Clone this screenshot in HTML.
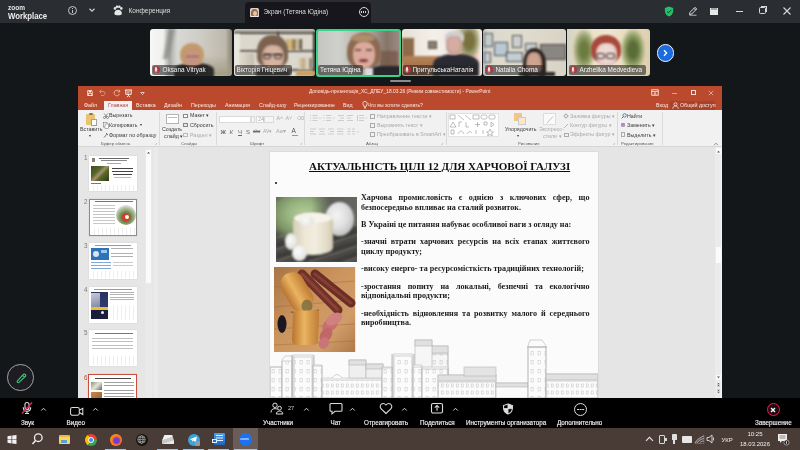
<!DOCTYPE html>
<html><head><meta charset="utf-8">
<style>
*{margin:0;padding:0;box-sizing:border-box}
html,body{width:800px;height:450px;overflow:hidden;background:#14171a;font-family:"Liberation Sans",sans-serif}
.a{position:absolute}
.t{position:absolute;white-space:nowrap;line-height:1}
#tb{left:0;top:0;width:800px;height:23px;background:#2c2d30}
#ppt{left:78px;top:86px;width:644px;height:312px;background:#e6e6e6;overflow:hidden}
#zbar{left:0;top:398px;width:800px;height:30px;background:#050505}
#task{left:0;top:428px;width:800px;height:22px;background:#4a3b35}
.vt{overflow:hidden;border-radius:3px}
.vt>div{filter:blur(1px)}
.nl{background:rgba(36,36,36,.6);border-radius:2px}
.mic{width:7px;height:7px;border-radius:50%;background:#a8383e}
.mic::after{content:"";position:absolute;left:2.6px;top:1.4px;width:1.8px;height:3.2px;border-radius:1px;background:#e8e0e0;box-shadow:0 1.2px 0 0.3px rgba(232,224,224,.6)}
.nt{font-size:6.4px;color:#f2f2f2}
.zl{font-size:6.3px;color:#f6f6f6;-webkit-text-stroke:0.12px #f6f6f6}
.tab{font-size:5.3px;color:#fbeae5}
.rb{font-size:5.3px;color:#3c3c3c}
.dis{color:#a8a8a8}
.gl{font-size:4.3px;color:#5c5c5c}
.sep{top:26px;width:0.6px;height:33px;background:#dadada}
.num{font-size:6.3px;color:#7a7a7a}
.th{width:47.5px;height:35.6px;background:#fff;overflow:hidden;box-shadow:0 0 0 0.5px #d8d8d8}
.bt{position:absolute;left:91px;width:228.5px;font-family:"Liberation Serif",serif;font-weight:bold;font-size:8.1px;line-height:9.8px;color:#1a1a1a}
.bt div{white-space:nowrap}
.bt .j{text-align:justify;text-align-last:justify;white-space:normal}
.img{filter:blur(1px)}
</style></head>
<body>
<svg width="0" height="0" style="position:absolute"><filter id="gb" x="0" y="0" width="100%" height="100%"><feGaussianBlur stdDeviation="0.5"/></filter></svg>
<div id="root" style="position:absolute;left:0;top:0;width:800px;height:450px;overflow:hidden;filter:url(#gb)">
<!-- Zoom title bar -->
<div id="tb" class="a">
  <div class="t" style="left:8px;top:4.8px;font-size:6.5px;font-weight:bold;color:#e6e6e6">zoom</div>
  <div class="t" style="left:8.3px;top:10.8px;font-size:9.6px;font-weight:bold;color:#ededed;transform:scaleX(0.81);transform-origin:0 0">Workplace</div>
  <!-- info icon -->
  <div class="a" style="left:67.8px;top:6px;width:9px;height:9px;border:1px solid #c8c8c8;border-radius:50%"></div>
  <div class="a" style="left:71.8px;top:7.8px;width:1.1px;height:1.1px;background:#c8c8c8"></div>
  <div class="a" style="left:71.8px;top:9.5px;width:1.1px;height:3.5px;background:#c8c8c8"></div>
  <!-- chevron -->
  <svg class="a" style="left:88px;top:7px" width="8" height="6" viewBox="0 0 8 6"><path d="M1.5 1.8 L4 4.2 L6.5 1.8" stroke="#cfcfcf" stroke-width="1.2" fill="none"/></svg>
  <!-- paw icon -->
  <svg class="a" style="left:113px;top:5px" width="10" height="11" viewBox="0 0 10 11"><circle cx="2" cy="3.4" r="1.3" fill="#e6e6e6"/><circle cx="4" cy="1.7" r="1.3" fill="#e6e6e6"/><circle cx="6.3" cy="1.7" r="1.3" fill="#e6e6e6"/><circle cx="8.3" cy="3.4" r="1.3" fill="#e6e6e6"/><path d="M1.3 8.5 C1.6 5.6 3.4 4.7 5.1 4.7 C6.8 4.7 8.6 5.6 8.9 8.5 C8.9 9.6 7.8 10.3 5.1 10.3 C2.5 10.3 1.3 9.6 1.3 8.5Z" fill="#e6e6e6"/></svg>
  <div class="t" style="left:128.5px;top:8.4px;font-size:6.5px;color:#dedede">Конференция</div>
  <!-- share tab -->
  <div class="a" style="left:245px;top:2px;width:126px;height:21px;background:#16171a;border-radius:4px 4px 0 0"></div>
  <div class="a" style="left:250px;top:8px;width:9px;height:9px;background:#d8d2cc;border-radius:1.5px;overflow:hidden"><div class="a" style="left:1px;top:0.5px;width:7px;height:8px;border-radius:50% 50% 40% 40%;background:#9a6a48"></div><div class="a" style="left:2.8px;top:2.5px;width:4.5px;height:5.5px;border-radius:50%;background:#e8c4a8"></div><div class="a" style="left:0;top:7.5px;width:9px;height:2px;background:#f0ece8"></div></div>
  <div class="t" style="left:263.5px;top:9px;font-size:6.4px;color:#dcdcdc">Экран (Тетяна Юдіна)</div>
  <div class="a" style="left:358.5px;top:7px;width:10px;height:10px;border:1.2px solid #d8d8d8;border-radius:50%"></div>
  <div class="a" style="left:360.7px;top:11.4px;width:5.5px;height:1.3px;border-left:1.3px solid #d8d8d8;border-right:1.3px solid #d8d8d8"></div>
  <div class="a" style="left:362.8px;top:11.4px;width:1.3px;height:1.3px;background:#d8d8d8"></div>
  <!-- right icons -->
  <svg class="a" style="left:664px;top:6px" width="10" height="11" viewBox="0 0 10 11"><path d="M5 0.5 L9.2 2 L9 6 C8.6 8.4 6.8 9.8 5 10.5 C3.2 9.8 1.4 8.4 1 6 L0.8 2 Z" fill="#24c266"/><path d="M3 5.4 L4.5 6.8 L7.2 4" stroke="#0d3a20" stroke-width="1" fill="none"/></svg>
  <svg class="a" style="left:688px;top:6px" width="10" height="10" viewBox="0 0 10 10"><path d="M1.5 8.5 L2 6.3 L7 1.3 L8.7 3 L3.7 8 Z M6 2.3 L7.7 4" stroke="#dcdcdc" stroke-width="1" fill="none"/><path d="M1.5 9.2 L8.5 9.2" stroke="#dcdcdc" stroke-width="0.8"/></svg>
  <svg class="a" style="left:709px;top:6px" width="10" height="10" viewBox="0 0 10 10"><rect x="1" y="2" width="8" height="7" fill="#e8e8e8"/><path d="M3 2 L3 4 M5 2 L5 4 M7 2 L7 4" stroke="#2a2a2c" stroke-width="0.7"/></svg>
  <div class="a" style="left:736px;top:11px;width:7px;height:1px;background:#d8d8d8"></div>
  <div class="a" style="left:759px;top:7px;width:7px;height:7px;border:1px solid #d8d8d8;border-radius:1.5px"></div>
  <div class="a" style="left:761px;top:6px;width:6px;height:6px;border-top:1px solid #d8d8d8;border-right:1px solid #d8d8d8"></div>
  <svg class="a" style="left:782px;top:6px" width="10" height="10" viewBox="0 0 10 10"><path d="M1.5 1.5 L8.5 8.5 M8.5 1.5 L1.5 8.5" stroke="#d8d8d8" stroke-width="1.1"/></svg>
</div>
<!-- video strip -->
<div class="a vt" style="left:150px;top:29px;width:82px;height:47px;background:linear-gradient(90deg,#f6f6f4 0%,#f0f0ee 16%,#a8a8a4 24%,#c4c4c0 29%,#d8d8d4 34%,#cfcdc6 60%,#bdb8ac 92%,#8a8272 100%)">
  <div class="a" style="left:14px;top:0;width:10px;height:30px;background:linear-gradient(90deg,rgba(140,140,136,0),#8c8c88,rgba(140,140,136,0));transform:skewX(-12deg)"></div>
  <div class="a" style="left:44px;top:26px;width:38px;height:21px;background:linear-gradient(180deg,rgba(170,162,136,0) 0,#a49c82 100%)"></div>
  <div class="a" style="left:24px;top:34px;width:40px;height:15px;background:#2c2a2a;border-radius:45% 45% 0 0"></div>
  <div class="a" style="left:30px;top:14px;width:24px;height:23px;background:#c29a6c;border-radius:50% 50% 42% 42%"></div>
  <div class="a" style="left:34.5px;top:21px;width:15.5px;height:17px;background:#c89282;border-radius:42% 42% 48% 48%"></div>
  <div class="a" style="left:36px;top:26.5px;width:13px;height:1.6px;background:#7e5a52"></div>
</div>
<div class="a vt" style="left:233.5px;top:29px;width:81.5px;height:47px;background:#dcd8ce">
  <div class="a" style="left:0;top:0;width:82px;height:3px;background:#b4afa5"></div>
  <div class="a" style="left:0;top:3px;width:82px;height:2.2px;background:#4e483f"></div>
  <div class="a" style="left:4px;top:21px;width:78px;height:2.2px;background:#625a50"></div>
  <div class="a" style="left:4px;top:40px;width:78px;height:2.2px;background:#625a50"></div>
  <div class="a" style="left:43px;top:3px;width:2px;height:20px;background:#4a4640"></div>
  <div class="a" style="left:79px;top:3px;width:3px;height:44px;background:#3a362f"></div>
  <div class="a" style="left:0;top:5px;width:6px;height:42px;background:#ece8e0"></div>
  <div class="a" style="left:52px;top:10px;width:16px;height:11px;background:linear-gradient(90deg,#c9a860,#d6c08a 30%,#8a6a3a 50%,#d8cfb8 70%,#4a3a2a)"></div>
  <div class="a" style="left:64px;top:29px;width:14px;height:11px;background:linear-gradient(90deg,#e0d8c0,#bfa880 40%,#e8e0d0 70%,#5a4a3a)"></div>
  <div class="a" style="left:62px;top:42px;width:20px;height:5px;background:#c9a060"></div>
  <div class="a" style="left:6px;top:24px;width:14px;height:16px;background:linear-gradient(90deg,#e0dace,#c4bcac)"></div>
  <div class="a" style="left:23.5px;top:6px;width:31px;height:32px;background:#7a6250;border-radius:48% 48% 30% 30%"></div>
  <div class="a" style="left:28px;top:16px;width:22px;height:25px;background:radial-gradient(ellipse at 50% 45%,#d6b4a2 0 45%,#c09c8a 80%);border-radius:40% 40% 45% 45%"></div>
  <div class="a" style="left:29px;top:24.5px;width:20px;height:1.5px;background:#2e2626"></div>
  <div class="a" style="left:29.5px;top:24.5px;width:8px;height:5.5px;border:1.5px solid #2e2626;border-radius:2px"></div>
  <div class="a" style="left:40.5px;top:24.5px;width:8px;height:5.5px;border:1.5px solid #2e2626;border-radius:2px"></div>
  <div class="a" style="left:22px;top:40px;width:34px;height:7px;background:#4a4644;border-radius:40% 40% 0 0"></div>
</div>
<div class="a vt" style="left:316px;top:29px;width:84.5px;height:47.5px;background:linear-gradient(90deg,#c4c5c1 0%,#d0d1cd 25%,#bdbbb5 45%,#a59e96 68%,#867468 85%,#9a8a80 100%);border:2px solid #34d489">
  <div class="a" style="left:62px;top:20px;width:18px;height:24px;background:#6e4e3c;opacity:.6"></div>
  <div class="a" style="left:29px;top:2px;width:34px;height:36px;background:#8c6a50;border-radius:50% 50% 40% 40%"></div>
  <div class="a" style="left:33px;top:3px;width:24px;height:8px;background:#ae8e6c;border-radius:50%"></div>
  <div class="a" style="left:34.5px;top:11px;width:22px;height:26px;background:#dcaa9c;border-radius:40% 40% 46% 46%"></div>
  <div class="a" style="left:37px;top:18px;width:6px;height:1.6px;background:#7a5a50"></div>
  <div class="a" style="left:48px;top:18px;width:6px;height:1.6px;background:#7a5a50"></div>
  <div class="a" style="left:41px;top:28px;width:9px;height:3px;background:#7a3a3a;border-radius:50%"></div>
  <div class="a" style="left:52px;top:35px;width:32px;height:11px;background:#26262a;border-radius:40% 0 0 0"></div>
  <div class="a" style="left:47px;top:37px;width:8px;height:9px;background:#dcdce0"></div>
</div>
<div class="a vt" style="left:401.5px;top:29px;width:80.5px;height:47px;background:linear-gradient(90deg,#e6e0d6 0%,#f4f0ea 40%,#eee8e0 64%,#d8b8a0 76%,#e8a890 86%,#f0d8cc 95%,#f6f2ee 100%)">
  <div class="a" style="left:0;top:9px;width:12px;height:24px;background:#8d6a48"></div>
  <div class="a" style="left:0;top:27px;width:38px;height:20px;background:linear-gradient(180deg,#b88458,#946440)"></div>
  <div class="a" style="left:26px;top:12px;width:9px;height:8px;background:#8a8070;border:1px solid #5a5048"></div>
  <div class="a" style="left:56px;top:0;width:22px;height:30px;background:radial-gradient(ellipse at 50% 40%,#7a7040 0 30%,#98a070 50%,rgba(160,150,100,0) 75%)"></div>
  <div class="a" style="left:31px;top:25px;width:46px;height:22px;background:#2c2c34;border-radius:45% 45% 0 0"></div>
  <div class="a" style="left:43px;top:2px;width:19px;height:11px;background:#d0cece;border-radius:50% 50% 20% 20%"></div>
  <div class="a" style="left:44.5px;top:7px;width:15.5px;height:19px;background:radial-gradient(ellipse at 50% 45%,#d4aca2 0 45%,#bc948c 80%);border-radius:40% 40% 45% 45%"></div>
</div>
<div class="a vt" style="left:482.5px;top:29px;width:83.5px;height:47px;background:linear-gradient(90deg,#b8bcc0 0,#dcd8cc 6%,#e0dccd 50%,#d8d3c4 100%)">
  <div class="a" style="left:1px;top:4px;width:9px;height:14px;border:1.5px solid #505860;background:#c4ccc8"></div>
  <div class="a" style="left:11.5px;top:13px;width:14px;height:14px;border:1.5px solid #4a5460;background:#bcc8d0"></div>
  <div class="a" style="left:29.5px;top:6px;width:10px;height:13px;border:1.5px solid #505458;background:#ccd0cc"></div>
  <div class="a" style="left:23.5px;top:23px;width:17px;height:10px;border:1.5px solid #4a5058;background:#c4ccd4"></div>
  <div class="a" style="left:1.5px;top:23px;width:7px;height:11px;border:1.5px solid #50585e;background:#c4ccd0"></div>
  <div class="a" style="left:42.5px;top:14px;width:12px;height:9px;border:1.5px solid #555a5e;background:#c8cccc"></div>
  <div class="a" style="left:57.5px;top:15px;width:26px;height:16px;border:1.6px solid #4a4040;background:#8a8684"></div>
  <div class="a" style="left:40px;top:19px;width:23px;height:30px;background:#2a2220;border-radius:50% 50% 20% 20%"></div>
  <div class="a" style="left:43.5px;top:23px;width:16px;height:26px;background:radial-gradient(ellipse at 50% 45%,#cca490 0 45%,#b48474 80%);border-radius:40% 40% 45% 45%"></div>
  <div class="a" style="left:36px;top:43px;width:36px;height:4px;background:#2a2624"></div>
</div>
<div class="a vt" style="left:566.8px;top:29px;width:83.2px;height:47px;background:linear-gradient(90deg,#d6d2c2 0,#e9dfc4 20%,#efe6ce 50%,#e6d8b8 80%,#ddd0b0 100%);border-radius:0 3px 3px 0">
  <div class="a" style="left:6px;top:0;width:22px;height:42px;background:radial-gradient(ellipse at 50% 50%,#6c7c40 0 25%,#98a470 50%,rgba(180,180,140,0) 75%)"></div>
  <div class="a" style="left:54px;top:0;width:24px;height:42px;background:radial-gradient(ellipse at 50% 50%,#5c6c38 0 25%,#90a068 50%,rgba(180,180,140,0) 75%)"></div>
  <div class="a" style="left:24px;top:6px;width:30px;height:27px;background:#a8483a;border-radius:50% 50% 35% 35%"></div>
  <div class="a" style="left:29px;top:14px;width:21px;height:24px;background:radial-gradient(ellipse at 50% 45%,#eed8d2 0 45%,#dcbcb4 80%);border-radius:40% 40% 45% 45%"></div>
  <div class="a" style="left:29.5px;top:24px;width:9px;height:5.5px;border:1.6px solid #2e2424;border-radius:40%"></div>
  <div class="a" style="left:39.5px;top:24px;width:9px;height:5.5px;border:1.6px solid #2e2424;border-radius:40%"></div>
</div>
<!-- name labels -->
<div class="a nl" style="left:151.5px;top:64.5px;width:56px;height:10px"></div>
<div class="a mic" style="left:152.5px;top:66px"></div>
<div class="t nt" style="left:162.5px;top:66.5px">Oksana Vitryak</div>
<div class="a nl" style="left:234.5px;top:64.5px;width:57px;height:10px"></div>
<div class="t nt" style="left:236.5px;top:66.5px">Вікторія Гніцевич</div>
<div class="a nl" style="left:318px;top:64.5px;width:45px;height:10px"></div>
<div class="t nt" style="left:320px;top:66.5px">Тетяна Юдіна</div>
<div class="a nl" style="left:402.5px;top:64.5px;width:74px;height:10px"></div>
<div class="a mic" style="left:403.5px;top:66px"></div>
<div class="t nt" style="left:412.5px;top:66.5px">ПритульськаНаталія</div>
<div class="a nl" style="left:484.5px;top:64.5px;width:60px;height:10px"></div>
<div class="a mic" style="left:485.5px;top:66px"></div>
<div class="t nt" style="left:495.5px;top:66.5px">Natalia Choma</div>
<div class="a nl" style="left:568.5px;top:64.5px;width:77px;height:10px"></div>
<div class="a mic" style="left:569.5px;top:66px"></div>
<div class="t nt" style="left:579.5px;top:66.5px">Arzhelika Medvedieva</div>
<!-- next button -->
<div class="a" style="left:656.5px;top:44px;width:17.5px;height:17.5px;border-radius:50%;background:#1d6ce0;border:1.5px solid #f0f4ff"></div>
<svg class="a" style="left:660.3px;top:47.8px" width="10" height="10" viewBox="0 0 10 10"><path d="M4 2.3 L6.6 5 L4 7.7" stroke="#fff" stroke-width="1.3" fill="none"/></svg>
<!-- handle -->
<div class="a" style="left:389.5px;top:80px;width:21px;height:2px;background:#8c8c8c;border-radius:1px"></div>
<!-- pencil circle -->
<div class="a" style="left:7.3px;top:364.3px;width:26.5px;height:26.5px;border-radius:50%;border:1.4px solid #a4a4a4;background:#1c1d21"></div>
<svg class="a" style="left:14px;top:371px" width="13" height="13" viewBox="0 0 13 13"><path d="M3.2 10.2 L9.6 3.2 A1.5 1.5 0 0 1 11.6 5.2 L4.8 11.6 A1.2 1.2 0 0 1 3.2 10.2 Z M8.6 4.3 L10.5 6.2" stroke="#34d07e" stroke-width="1.1" fill="none"/></svg>
<!-- PPT window -->
<div id="ppt" class="a">
  <!-- title row -->
  <div class="a" style="left:0;top:0;width:644px;height:24px;background:#bb4a2d"></div>
  <svg class="a" style="left:8.5px;top:3.8px" width="6.4" height="6.4" viewBox="0 0 8 8"><path d="M0.8 0.8 H6.3 L7.2 1.7 V7.2 H0.8Z" fill="none" stroke="#fff" stroke-width="0.9"/><rect x="2.2" y="0.8" width="3.3" height="2.2" fill="#fff"/><rect x="2" y="4.5" width="4" height="2.7" fill="none" stroke="#fff" stroke-width="0.7"/></svg>
  <svg class="a" style="left:20px;top:3px" width="8" height="8" viewBox="0 0 8 8"><path d="M2 2.5 H5 C6.5 2.5 7 3.5 7 4.5 C7 5.8 6 6.5 5 6.5 H3" fill="none" stroke="#d79a86" stroke-width="0.9"/><path d="M3.3 0.9 L1.4 2.5 L3.3 4.1" fill="none" stroke="#d79a86" stroke-width="0.9"/></svg>
  <svg class="a" style="left:34.5px;top:3px" width="8" height="8" viewBox="0 0 8 8"><path d="M6.3 2.6 A2.8 2.8 0 1 0 6.5 5" fill="none" stroke="#e8b8a8" stroke-width="0.9"/><path d="M6.6 0.8 V2.9 H4.5" fill="none" stroke="#e8b8a8" stroke-width="0.9"/></svg>
  <svg class="a" style="left:46px;top:2.5px" width="9" height="9" viewBox="0 0 9 9"><path d="M1 1 H8 M1.8 1 V5.3 H7.2 V1 M4.5 5.3 V6.5 M3 8.2 L4.5 6.5 L6 8.2" fill="none" stroke="#fff" stroke-width="0.9"/><path d="M3 2.8 H6 M3 3.9 H5" stroke="#fff" stroke-width="0.6"/></svg>
  <svg class="a" style="left:61.5px;top:5px" width="5" height="4" viewBox="0 0 5 4"><path d="M0.5 1.5 H4.5 M1.2 2.3 L2.5 3.5 L3.8 2.3" fill="none" stroke="#fff" stroke-width="0.7"/></svg>
  <div class="t" style="left:231px;top:4.3px;font-size:4.9px;color:#fbe9e4">Доповідь-презентація_ХС_ДПЕУ_18.03.26 (Режим совместимости) - PowerPoint</div>
  <svg class="a" style="left:573px;top:3px" width="8" height="7" viewBox="0 0 8 7"><rect x="0.8" y="0.8" width="6.4" height="5.4" fill="none" stroke="#fff" stroke-width="0.8"/><path d="M0.8 2.5 H7.2 M4 4 V6.2 M2.6 4.8 L4 3.5 L5.4 4.8" fill="none" stroke="#fff" stroke-width="0.7"/></svg>
  <div class="a" style="left:593.5px;top:6.5px;width:5px;height:0.6px;background:#e0a090"></div>
  <div class="a" style="left:612.5px;top:4px;width:5px;height:5px;border:0.7px solid #f6dcd4"></div>
  <svg class="a" style="left:630px;top:3.5px" width="6" height="6" viewBox="0 0 6 6"><path d="M0.8 0.8 L5.2 5.2 M5.2 0.8 L0.8 5.2" stroke="#f0ccc2" stroke-width="0.65"/></svg>
  <!-- tabs -->
  <div class="a" style="left:26px;top:14.5px;width:27.5px;height:9.5px;background:#f2f2f2"></div>
  <div class="t tab" style="left:6px;top:16.5px">Файл</div>
  <div class="t tab" style="left:30px;top:16.5px;color:#a84a50">Главная</div>
  <div class="t tab" style="left:58px;top:16.5px">Вставка</div>
  <div class="t tab" style="left:86px;top:16.5px">Дизайн</div>
  <div class="t tab" style="left:113px;top:16.5px">Переходы</div>
  <div class="t tab" style="left:147px;top:16.5px">Анимация</div>
  <div class="t tab" style="left:181px;top:16.5px">Слайд-шоу</div>
  <div class="t tab" style="left:216px;top:16.5px">Рецензирование</div>
  <div class="t tab" style="left:265px;top:16.5px">Вид</div>
  <svg class="a" style="left:283.5px;top:15px" width="6" height="8" viewBox="0 0 6 8"><path d="M1.8 5.3 C1.8 4.3 0.8 3.8 0.8 2.6 A2.2 2.2 0 0 1 5.2 2.6 C5.2 3.8 4.2 4.3 4.2 5.3 Z M2 6.3 H4 M2.3 7.3 H3.7" fill="none" stroke="#fff" stroke-width="0.7"/></svg>
  <div class="t tab" style="left:289.5px;top:16.7px;font-size:5px">Что вы хотите сделать?</div>
  <div class="t tab" style="left:578px;top:16.5px">Вход</div>
  <div class="a" style="left:592px;top:15px;width:45px;height:8.5px;background:#a8432a"></div>
  <svg class="a" style="left:594px;top:15.5px" width="7" height="7" viewBox="0 0 7 7"><circle cx="3.5" cy="2.3" r="1.6" fill="none" stroke="#fff" stroke-width="0.7"/><path d="M0.8 6.8 C0.8 4.8 2 4 3.5 4 C5 4 6.2 4.8 6.2 6.8" fill="none" stroke="#fff" stroke-width="0.7"/></svg>
  <div class="t tab" style="left:602px;top:16.5px">Общий доступ</div>
  <!-- ribbon -->
  <div class="a" style="left:0;top:24px;width:644px;height:37px;background:#f2f1f2;border-bottom:0.6px solid #d6d6d6"></div>
  <div class="a sep" style="left:81px"></div><div class="a sep" style="left:138px"></div><div class="a sep" style="left:226px"></div><div class="a sep" style="left:368px"></div><div class="a sep" style="left:539px"></div><div class="a sep" style="left:583.5px"></div>
  <!-- clipboard -->
  <div class="a" style="left:8px;top:28px;width:9px;height:11px;background:#e9c46e;border-radius:1px"></div>
  <div class="a" style="left:10.5px;top:26.5px;width:4px;height:2.5px;background:#8a7458;border-radius:1px"></div>
  <div class="a" style="left:13px;top:33px;width:6px;height:7px;background:#fff;border:0.5px solid #9aa0a6"></div>
  <div class="t rb" style="left:2px;top:41px">Вставить</div>
  <div class="t rb" style="left:11px;top:47.5px;font-size:4px">▾</div>
  <svg class="a" style="left:25px;top:26.5px" width="6" height="6" viewBox="0 0 6 6"><path d="M1.2 0.5 L4 4 M4.8 0.5 L2 4" stroke="#555" stroke-width="0.6"/><circle cx="1.5" cy="4.5" r="1" fill="none" stroke="#555" stroke-width="0.6"/><circle cx="4.5" cy="4.5" r="1" fill="none" stroke="#555" stroke-width="0.6"/></svg>
  <div class="t rb" style="left:31px;top:27px">Вырезать</div>
  <svg class="a" style="left:25px;top:36px" width="6" height="7" viewBox="0 0 6 7"><rect x="0.5" y="0.5" width="3.5" height="4.5" fill="#fff" stroke="#666" stroke-width="0.5"/><rect x="2" y="2" width="3.5" height="4.5" fill="#fff" stroke="#666" stroke-width="0.5"/></svg>
  <div class="t rb" style="left:31px;top:37px">Копировать</div>
  <div class="t rb" style="left:62px;top:36.5px;font-size:4px">▾</div>
  <svg class="a" style="left:25px;top:46px" width="6" height="6" viewBox="0 0 6 6"><path d="M1 5.5 L3.8 2.2 M3 1 L5 3" stroke="#555" stroke-width="0.8"/></svg>
  <div class="t rb" style="left:31px;top:46.5px">Формат по образцу</div>
  <div class="t gl" style="left:23px;top:55.5px">Буфер обмена</div>
  <div class="t gl" style="left:77px;top:55px;font-size:4px">⌟</div>
  <!-- slides -->
  <div class="a" style="left:88px;top:27.5px;width:13px;height:10px;background:#fff;border:0.6px solid #b4b4b4"></div>
  <div class="a" style="left:90px;top:31px;width:9px;height:0.8px;background:#bbb"></div>
  <div class="t rb" style="left:84px;top:41px">Создать</div>
  <div class="t rb" style="left:86px;top:47.5px">слайд ▾</div>
  <div class="a" style="left:105px;top:27.5px;width:5px;height:4px;border:0.6px solid #888;background:#fff"></div>
  <div class="t rb" style="left:112px;top:27px">Макет ▾</div>
  <div class="a" style="left:105px;top:37px;width:5px;height:4px;border:0.6px solid #888;background:#e0e8ea"></div>
  <div class="t rb" style="left:112px;top:37px">Сбросить</div>
  <div class="a" style="left:105px;top:46.5px;width:5px;height:4px;border:0.6px solid #bbb"></div>
  <div class="t rb dis" style="left:112px;top:46.5px">Раздел ▾</div>
  <div class="t gl" style="left:103px;top:55.5px">Слайды</div>
  <!-- font -->
  <div class="a" style="left:141px;top:29.5px;width:32px;height:7.5px;background:#fff;border:0.5px solid #dadada"></div><div class="a" style="left:173px;top:29.5px;width:4px;height:7.5px;background:#f6f6f6;border:0.5px solid #dadada"></div>
  <div class="a" style="left:178px;top:29.5px;width:7.5px;height:7.5px;background:#fff;border:0.5px solid #dadada"></div><div class="a" style="left:185.5px;top:29.5px;width:10.5px;height:7.5px;background:#f6f6f6;border:0.5px solid #dadada"></div>
  <div class="t rb dis" style="left:180px;top:30.5px">24</div>
  <div class="t rb dis" style="left:198.5px;top:30px">A˄</div><div class="t rb dis" style="left:207.5px;top:30px">A˅</div>
  <div class="t rb dis" style="left:219px;top:30px">⌫</div>
  <div class="t rb dis" style="left:142.5px;top:42.5px;font-weight:bold;font-size:6px;color:#6a6a6a">Ж</div>
  <div class="t rb dis" style="left:151.5px;top:42.5px;font-style:italic;font-size:6px;color:#6a6a6a">К</div>
  <div class="t rb dis" style="left:160px;top:42.5px;text-decoration:underline;font-size:6px;color:#6a6a6a">Ч</div>
  <div class="t rb dis" style="left:168px;top:42.5px;font-size:6px;color:#6a6a6a">S</div>
  <div class="t rb dis" style="left:175px;top:43.5px;text-decoration:line-through;font-size:4.5px;color:#6a6a6a">abc</div>
  <div class="t rb dis" style="left:185px;top:42.8px;font-size:5px">AV▾</div>
  <div class="t rb dis" style="left:198px;top:42.8px;font-size:5.5px">Aa▾</div>
  <div class="t rb" style="left:213.5px;top:41.8px;font-size:6.5px;color:#555">A</div>
  <div class="a" style="left:213.5px;top:49.2px;width:6px;height:0.8px;background:#d08080"></div>
  <div class="t gl" style="left:172px;top:55.5px">Шрифт</div>
  <div class="t gl" style="left:222px;top:55px;font-size:4px">⌟</div>
  <!-- paragraph -->
  <svg class="a" style="left:230px;top:28px" width="60" height="24" viewBox="0 0 60 24"><g stroke="#bdbdbd" stroke-width="0.7" fill="none"><path d="M2 1.5h1M4.5 1.5h5M2 4h1M4.5 4h5M2 6.5h1M4.5 6.5h5M11 3.5l1 1 1-1"/><path d="M15.5 1.5h1M18 1.5h5M15.5 4h1M18 4h5M15.5 6.5h1M18 6.5h5M24.5 3.5l1 1 1-1"/><path d="M30 1.5h6M32 4h4M30 6.5h6"/><path d="M39 1.5h6M39 4h4M39 6.5h6"/><path d="M51 1.5h5M51 4h5M51 6.5h5M49.5 1v6M57 3.5l1 1 1-1"/><path d="M2 15h6M2 17.5h4M2 20h6M11 15h6M12 17.5h4M11 20h6M20 15h6M22 17.5h4M20 20h6M29 15h6.5M29 17.5h6.5M29 20h6.5M39.5 15h3M39.5 17.5h3M39.5 20h3M44 15h3M44 17.5h3M44 20h3M49 17.5l1 1 1-1"/></g></svg>
  <div class="a" style="left:292px;top:27.5px;width:5px;height:5px;border:0.6px solid #aaa"></div>
  <div class="t rb dis" style="left:299px;top:27.5px">Направление текста ▾</div>
  <div class="a" style="left:292px;top:37px;width:5px;height:5px;border:0.6px solid #aaa"></div>
  <div class="t rb dis" style="left:299px;top:37px">Выровнять текст ▾</div>
  <div class="a" style="left:292px;top:46px;width:5px;height:5px;border:0.6px solid #aaa"></div>
  <div class="t rb dis" style="left:299px;top:46px">Преобразовать в SmartArt ▾</div>
  <div class="t gl" style="left:288px;top:55.5px">Абзац</div>
  <div class="t gl" style="left:363px;top:55px;font-size:4px">⌟</div>
  <!-- drawing -->
  <div class="a" style="left:370px;top:26.5px;width:54.5px;height:24px;background:#fff;border:0.5px solid #e2e2e2"></div>
  <div class="a" style="left:419.5px;top:27px;width:5px;height:23.5px;background:#f2f2f2;border-left:0.5px solid #e4e4e4"></div>
  <svg class="a" style="left:371px;top:28px" width="48" height="22" viewBox="0 0 48 22"><g stroke="#8a8a8a" stroke-width="0.55" fill="none"><rect x="1" y="1" width="5" height="4"/><path d="M9 1l6 5M16 1l6 5"/><rect x="24" y="1" width="6" height="4"/><rect x="32" y="1" width="6" height="4" rx="1.5"/><rect x="40" y="1" width="6" height="4" rx="1"/><path d="M1 13l3-5 3 5z"/><path d="M10 8v5M10 8h3M17 8v5h3M26 10.5h5M28.5 8v5"/><path d="M35 8h3v3h-3zM42 8l3 2.5-3 2.5z"/><path d="M2 16h3v4h-3zM9 20c2-4 4-4 6 0M18 20c2-3 3-3 5-1M27 16v4M34 16v4M41 15l1.5 3h2l-2 1.5 1 2.5-2.5-1.5-2.5 1.5 1-2.5-2-1.5h2z"/></g></svg>
  <div class="a" style="left:436px;top:27px;width:8px;height:8px;background:#f2c58a"></div>
  <div class="a" style="left:440px;top:31px;width:8px;height:8px;background:#fde7c8;border:0.5px solid #ccc"></div>
  <div class="t rb" style="left:427px;top:41px">Упорядочить</div>
  <div class="t rb" style="left:439px;top:47.5px;font-size:4px">▾</div>
  <div class="a" style="left:465px;top:27px;width:13px;height:12px;background:#fafafa;border:0.6px solid #dcdcdc"></div>
  <svg class="a" style="left:467px;top:29px" width="10" height="9" viewBox="0 0 10 9"><path d="M2 8 L8 1.5" stroke="#b8b8b8" stroke-width="0.9"/></svg>
  <div class="t rb dis" style="left:461px;top:41px">Экспресс-</div>
  <div class="t rb dis" style="left:465px;top:47.5px">стили ▾</div>
  <div class="a" style="left:486px;top:28px;width:4px;height:4px;border:0.6px solid #aaa;transform:rotate(45deg)"></div>
  <div class="t rb dis" style="left:492px;top:27.5px">Заливка фигуры ▾</div>
  <svg class="a" style="left:485px;top:36.5px" width="6" height="6" viewBox="0 0 6 6"><path d="M1 5 L5 1" stroke="#aaa" stroke-width="0.8"/></svg>
  <div class="t rb dis" style="left:492px;top:37px">Контур фигуры ▾</div>
  <div class="a" style="left:486px;top:46.5px;width:5px;height:4px;border:0.6px solid #aaa"></div>
  <div class="t rb dis" style="left:492px;top:46px">Эффекты фигур ▾</div>
  <div class="t gl" style="left:440px;top:55.5px">Рисование</div>
  <div class="t gl" style="left:535px;top:55px;font-size:4px">⌟</div>
  <!-- editing -->
  <svg class="a" style="left:542.5px;top:27px" width="6" height="6" viewBox="0 0 6 6"><circle cx="3.6" cy="2.4" r="1.7" fill="none" stroke="#2b5797" stroke-width="0.7"/><path d="M2.4 3.6 L0.6 5.4" stroke="#2b5797" stroke-width="0.8"/></svg>
  <div class="t rb" style="left:549px;top:27.5px">Найти</div>
  <div class="a" style="left:543px;top:37px;width:4px;height:4px;background:linear-gradient(#9a88c8,#c898c0);border-radius:1px"></div>
  <div class="t rb" style="left:549px;top:37px">Заменить ▾</div>
  <div class="a" style="left:543px;top:46px;width:3.5px;height:5px;border:0.5px dashed #aaa"></div>
  <div class="t rb" style="left:549px;top:46.5px">Выделить ▾</div>
  <div class="t gl" style="left:543px;top:55.5px">Редактирование</div>
  <svg class="a" style="left:634.5px;top:55.5px" width="6" height="4" viewBox="0 0 6 4"><path d="M1 3.2 L3 1.2 L5 3.2" stroke="#666" stroke-width="0.7" fill="none"/></svg>
  <!-- work area -->
  <div class="a" style="left:0;top:61px;width:67px;height:251px;background:#e6e6e6"></div>
  <div class="a" style="left:67px;top:61px;width:7px;height:251px;background:#e9e9e9"></div>
  <div class="a" style="left:68px;top:63.5px;width:5px;height:5px;background:#fbfbfb"></div>
  <svg class="a" style="left:68px;top:63.5px" width="5" height="5" viewBox="0 0 5 5"><path d="M1 3.4 L2.5 1.7 L4 3.4Z" fill="#555"/></svg>
  <div class="a" style="left:68px;top:69px;width:5px;height:128px;background:#fbfbfb"></div>
  <div class="a" style="left:75.5px;top:61px;width:0.8px;height:251px;background:#d8d8d8"></div>
  <div class="a" style="left:76.3px;top:61px;width:567.7px;height:251px;background:#e5e5e5"></div>
  <div class="a" style="left:637px;top:61px;width:6px;height:251px;background:#ebebeb"></div><div class="a" style="left:643px;top:61px;width:1px;height:251px;background:#f6f6f6"></div><div class="a" style="left:637.5px;top:62px;width:5px;height:6px;background:#fafafa"></div>
  <svg class="a" style="left:637.5px;top:62.5px" width="5" height="5" viewBox="0 0 5 5"><path d="M1 3.4 L2.5 1.7 L4 3.4Z" fill="#555"/></svg>
  <div class="a" style="left:637.5px;top:161px;width:5px;height:16px;background:#fbfbfb"></div>
  <div class="a" style="left:76.3px;top:61px;width:4px;height:251px;background:#eaeaea"></div>
  <div class="a" style="left:637.5px;top:288.5px;width:5px;height:5px;background:#fafafa"></div>
  <svg class="a" style="left:637.5px;top:288.8px" width="5" height="5" viewBox="0 0 5 5"><path d="M1 1.6 L2.5 3.3 L4 1.6Z" fill="#555"/></svg>
  <svg class="a" style="left:637.5px;top:295.5px" width="5" height="5" viewBox="0 0 5 5"><path d="M1 2.2 L2.5 0.8 L4 2.2Z M1 4.2 L2.5 2.8 L4 4.2Z" fill="#666"/></svg>
  <svg class="a" style="left:637.5px;top:302.5px" width="5" height="5" viewBox="0 0 5 5"><path d="M1 0.8 L2.5 2.2 L4 0.8Z M1 2.8 L2.5 4.2 L4 2.8Z" fill="#666"/></svg>
  <!-- thumbnails -->
  <div class="t num" style="left:6px;top:69px">1</div>
  <div class="a th" style="left:11px;top:69.5px">
    <div class="a" style="left:3px;top:2.5px;width:3px;height:3.5px;background:#8a8070"></div>
    <div class="a" style="left:10px;top:2.5px;width:30px;height:1px;background:#666"></div>
    <div class="a" style="left:12px;top:4.5px;width:26px;height:1px;background:#888"></div>
    <div class="a" style="left:18px;top:7px;width:14px;height:0.8px;background:#aaa"></div>
    <div class="a" style="left:2px;top:10px;width:18px;height:15px;background:linear-gradient(135deg,#3e4a1e 0,#55682a 35%,#a89070 50%,#5a6a2a 62%,#2e3a18 100%)"></div>
    <div class="a" style="left:23px;top:12.5px;width:21px;height:1.2px;background:#444"></div>
    <div class="a" style="left:23px;top:15.3px;width:21px;height:1.2px;background:#444"></div>
    <div class="a" style="left:24px;top:18px;width:19px;height:1.2px;background:#444"></div>
    <div class="a" style="left:25px;top:21px;width:17px;height:0.8px;background:#bbb"></div>
    <div class="a" style="left:2px;top:27px;width:10px;height:1px;background:#777"></div>
    <div class="a" style="left:1px;top:29px;width:46px;height:6px;background:repeating-linear-gradient(90deg,#fff 0 3px,#f0f0f0 3px 4px)"></div>
  </div>
  <div class="t num" style="left:6px;top:113px">2</div>
  <div class="a th" style="left:10.5px;top:112.5px;width:48.5px;height:37px;border:1px solid #8c8c8c">
    <div class="a" style="left:5px;top:1.8px;width:38px;height:1px;background:#777"></div>
    <div class="a" style="left:3px;top:5px;width:22px;height:13px;background:repeating-linear-gradient(180deg,#c4c4c4 0 0.8px,#fff 0.8px 3px)"></div>
    <div class="a" style="left:26px;top:5px;width:20px;height:20px;border-radius:50%;background:radial-gradient(circle at 50% 62%,#d8382a 0 20%,#6a8a48 32%,#a8b898 55%,#d8dcd4 72%)"></div>
    <div class="a" style="left:35px;top:15px;width:4px;height:4px;background:#fff;border-radius:50%"></div>
    <div class="a" style="left:3px;top:20px;width:22px;height:6px;background:repeating-linear-gradient(180deg,#c8c8c8 0 0.8px,#fff 0.8px 3px)"></div>
    <div class="a" style="left:1px;top:28px;width:45px;height:7px;background:repeating-linear-gradient(90deg,#fff 0 3px,#eeeeee 3px 4px)"></div>
  </div>
  <div class="t num" style="left:6px;top:157px">3</div>
  <div class="a th" style="left:11px;top:157px">
    <div class="a" style="left:6px;top:1.5px;width:36px;height:1.2px;background:#999"></div>
    <div class="a" style="left:2px;top:4.5px;width:18px;height:12px;background:#2e72b8"></div>
    <div class="a" style="left:4px;top:7.5px;width:6px;height:6px;border-radius:50%;background:#d8e6f2"></div>
    <div class="a" style="left:12px;top:7px;width:6px;height:3px;background:#9cc4ec"></div>
    <div class="a" style="left:22px;top:5px;width:22px;height:10px;background:repeating-linear-gradient(180deg,#b0b0b0 0 0.8px,#fff 0.8px 2.6px)"></div>
    <div class="a" style="left:2px;top:19px;width:20px;height:8px;background:repeating-linear-gradient(180deg,#80a8d8 0 0.9px,#fff 0.9px 2.8px)"></div>
    <div class="a" style="left:24px;top:19px;width:20px;height:8px;background:repeating-linear-gradient(180deg,#cccccc 0 0.8px,#fff 0.8px 2.8px)"></div>
    <div class="a" style="left:1px;top:28px;width:46px;height:7px;background:repeating-linear-gradient(90deg,#fff 0 3px,#eeeeee 3px 4px)"></div>
  </div>
  <div class="t num" style="left:6px;top:201px">4</div>
  <div class="a th" style="left:11px;top:201px">
    <div class="a" style="left:5px;top:1.5px;width:38px;height:1.2px;background:#999"></div>
    <div class="a" style="left:1.5px;top:5px;width:17px;height:27px;background:linear-gradient(180deg,#2a3060 0,#303a70 55%,#e8c030 55% 66%,#1c1e3a 66%)"></div>
    <div class="a" style="left:2px;top:6px;width:9px;height:14px;background:linear-gradient(160deg,#c8ccd8,#8088a8)"></div>
    <div class="a" style="left:12px;top:24px;width:3px;height:3px;border-radius:50%;background:#f0f0f0"></div>
    <div class="a" style="left:21px;top:5px;width:24px;height:11px;background:repeating-linear-gradient(180deg,#b4b4b4 0 0.8px,#fff 0.8px 2.4px)"></div>
    <div class="a" style="left:21px;top:19px;width:24px;height:14px;background:repeating-linear-gradient(90deg,#fff 0 3px,#eeeeee 3px 4px)"></div>
  </div>
  <div class="t num" style="left:6px;top:244px">5</div>
  <div class="a th" style="left:11px;top:244px">
    <div class="a" style="left:6px;top:3px;width:38px;height:1.4px;background:#777"></div>
    <div class="a" style="left:3px;top:8px;width:41px;height:17px;background:repeating-linear-gradient(180deg,#c0c0c0 0 0.8px,#fff 0.8px 3.4px)"></div>
    <div class="a" style="left:1px;top:26px;width:46px;height:9px;background:repeating-linear-gradient(90deg,#fff 0 3px,#efefef 3px 4px)"></div>
  </div>
  <div class="t num" style="left:6px;top:289px;color:#c2492c">6</div>
  <div class="a th" style="left:10px;top:288px;width:49px;height:30px;border:1.2px solid #c8503a">
    <div class="a" style="left:6px;top:2.5px;width:36px;height:1.8px;background:#444"></div>
    <div class="a" style="left:2px;top:7px;width:11px;height:8px;background:linear-gradient(135deg,#8a9a70,#e8e4d8 50%,#6a6050)"></div>
    <div class="a" style="left:2px;top:16.5px;width:11px;height:10px;background:linear-gradient(135deg,#c88848,#9a5a30)"></div>
    <div class="a" style="left:15px;top:7px;width:30px;height:19px;background:repeating-linear-gradient(180deg,#a0a0a0 0 0.8px,#fff 0.8px 2.8px)"></div>
  </div>
  <!-- slide -->
  <div class="a" id="slide" style="left:192px;top:65.8px;width:328px;height:247px;background:#fbfbfb;box-shadow:0 0 0 0.5px #d4d4d4"></div>
</div>
<!-- slide content (absolute page coords, clipped) -->
<div class="a" style="left:270px;top:151px;width:328px;height:247px;overflow:hidden">
  <div class="t" style="left:39px;top:9.6px;font-family:'Liberation Serif',serif;font-weight:bold;font-size:11px;color:#111;text-decoration:underline;text-decoration-thickness:0.9px;text-underline-offset:1.2px">АКТУАЛЬНІСТЬ ЦІЛІ 12 ДЛЯ ХАРЧОВОЇ ГАЛУЗІ</div>
  <div class="a" style="left:5px;top:31px;width:1.6px;height:1.6px;background:#222;border-radius:50%"></div>
  <!-- image 1: cheese -->
  <div class="a" style="left:6px;top:46px;width:81px;height:64.6px;overflow:hidden;background:#5e5c58">
    <div class="a img" style="left:0;top:0;width:81px;height:65px;background:repeating-linear-gradient(162deg,#3e3c3a 0 5px,#6a6864 5px 6.5px,#4a4845 6.5px 11px)"></div>
    <div class="a img" style="left:-14px;top:-14px;width:84px;height:62px;background:radial-gradient(closest-side,#b4cc9c 0,#98b480 40%,#7e9468 68%,rgba(110,120,100,0) 100%)"></div>
    <div class="a img" style="left:36px;top:-5px;width:50px;height:34px;background:linear-gradient(90deg,rgba(90,90,86,0),#5e5e5a 40%,#686864)"></div>
    <div class="a img" style="left:49px;top:5px;width:29px;height:34px;border-radius:50%;background:radial-gradient(ellipse at 40% 40%,#f4f4f4 0,#dedede 45%,#b0b0b0 88%)"></div>
    <div class="a img" style="left:17px;top:16px;width:40px;height:42px;border-radius:50% 50% 50% 50%/22% 22% 18% 18%;background:linear-gradient(90deg,#d6ceb8 0,#ede7d6 30%,#f2ede0 55%,#e2dbc6 85%,#cfc6ae 100%)"></div>
    <div class="a img" style="left:18px;top:16px;width:38px;height:10px;border-radius:50%;background:#f6f3ea"></div>
    <div class="a img" style="left:24px;top:19px;width:14px;height:10px;border-radius:50%;background:radial-gradient(circle at 40% 40%,#fbfbfb,#dcdcd8)"></div>
    <div class="a img" style="left:9px;top:36px;width:12px;height:17px;border-radius:50%;background:radial-gradient(circle at 40% 40%,#fbfbfb,#d4d4d0)"></div>
    <div class="a img" style="left:16px;top:48px;width:15px;height:16px;border-radius:50%;background:radial-gradient(circle at 40% 40%,#fcfcfc,#d8d8d4)"></div>
  </div>
  <!-- image 2: sausage -->
  <div class="a" style="left:4.4px;top:116px;width:81.2px;height:85px;overflow:hidden"><svg class="a" style="left:0;top:0" width="81.2" height="85" viewBox="0 0 81.2 85">
    <defs>
      <linearGradient id="wd" x1="0" y1="0" x2="1" y2="1"><stop offset="0" stop-color="#a87444"/><stop offset="0.45" stop-color="#cc955e"/><stop offset="0.75" stop-color="#d09c68"/><stop offset="1" stop-color="#b07a48"/></linearGradient>
      <linearGradient id="br" x1="0" y1="0" x2="1" y2="0"><stop offset="0" stop-color="#b87430"/><stop offset="0.45" stop-color="#eab462"/><stop offset="1" stop-color="#c07c34"/></linearGradient>
      
    </defs>
    <rect width="81.2" height="85" fill="url(#wd)"/>
    <g>
      <path d="M0 20 L81 14 M0 40 L81 33 M0 62 L81 57 M0 78 L81 74" stroke="#8a5a30" stroke-width="1" opacity=".35"/>
      <path d="M28 7 L64 43" stroke="#6e3028" stroke-width="9" stroke-linecap="round"/>
      <path d="M28 7 L64 43" stroke="#a05040" stroke-width="3" stroke-linecap="round" stroke-dasharray="2 2" opacity=".6"/>
      <path d="M41 7 L77 36" stroke="#6a2e26" stroke-width="9" stroke-linecap="round"/>
      <path d="M41 7 L77 36" stroke="#9a4a3c" stroke-width="3" stroke-linecap="round" stroke-dasharray="2 2" opacity=".6"/>
      <rect x="-12" y="-21" width="24" height="42" rx="12" fill="url(#br)" transform="translate(23 25) rotate(-30)"/>
      <ellipse cx="33" cy="39" rx="5.5" ry="6.5" fill="#7e7040" opacity=".85"/>
      <path d="M17 45 C24 47 36 46 45 43" stroke="#6a4020" stroke-width="1.6" fill="none" opacity=".55"/>
      <path d="M22 44 L42 43 C45 43 45 46 45 50 L44 74 C44 77 41 78 38 78 L23 78 C20 78 18 76 18 72 L19 48 C19 45 20 44 22 44Z" fill="url(#br)"/>
      <ellipse cx="56" cy="58" rx="9" ry="6" fill="#c67070" transform="rotate(-40 56 58)"/>
      <ellipse cx="60" cy="52" rx="9" ry="5.5" fill="#d08080" transform="rotate(-30 60 52)"/>
      <ellipse cx="52" cy="68" rx="8" ry="5.5" fill="#c06868" transform="rotate(-55 52 68)"/>
      <ellipse cx="50" cy="76" rx="6" ry="5" fill="#c87474" transform="rotate(-60 50 76)"/>
      <ellipse cx="8" cy="57" rx="4.5" ry="9" fill="#1e1620"/>
    </g>
  </svg></div>
  <!-- body text -->
  <div class="bt" style="top:42px"><div class="j">Харчова промисловість є однією з ключових сфер, що</div><div>безпосередньо впливає на сталий розвиток.</div></div>
  <div class="bt" style="top:68.8px"><div>В Україні це питання набуває особливої ваги з огляду на:</div></div>
  <div class="bt" style="top:86px"><div class="j">-значні втрати харчових ресурсів на всіх етапах життєвого</div><div>циклу продукту;</div></div>
  <div class="bt" style="top:113.2px"><div>-високу енерго- та ресурсомісткість традиційних технологій;</div></div>
  <div class="bt" style="top:130.6px"><div class="j">-зростання попиту на локальні, безпечні та екологічно</div><div>відповідальні продукти;</div></div>
  <div class="bt" style="top:157.6px"><div class="j">-необхідність відновлення та розвитку малого й середнього</div><div>виробництва.</div></div>
  <!-- skyline -->
  <svg class="a" style="left:0;top:185px" width="328" height="62" viewBox="0 185 328 62">
    <defs>
      <pattern id="win" width="7" height="9" patternUnits="userSpaceOnUse"><rect x="2" y="2.5" width="2.2" height="3.5" fill="none" stroke="#c4c4c4" stroke-width="0.5"/></pattern>
      <pattern id="win2" width="5" height="7" patternUnits="userSpaceOnUse"><rect x="1.2" y="2" width="2" height="3" fill="none" stroke="#c0c0c0" stroke-width="0.5"/></pattern>
    </defs>
    <g stroke="#b0b0b0" stroke-width="0.55" fill="#fbfbfb">
      <rect x="160" y="195" width="18" height="52" fill="#f6f6f6"/><rect x="160" y="195" width="18" height="7" fill="#e0e0e0"/><rect x="160" y="203" width="18" height="44" fill="url(#win)"/>
      <rect x="145" y="189" width="17" height="58" fill="#f6f6f6"/>
      <rect x="145" y="189" width="17" height="6" fill="#e0e0e0"/>
      <path d="M0 216 H12 V247 H0Z"/><rect x="0" y="216" width="12" height="31" fill="url(#win)"/>
      <path d="M12 209 L15 205 H22 V247 H12Z"/><rect x="12" y="210" width="10" height="37" fill="url(#win)"/>
      <path d="M23 204 H43 V247 H23Z"/><rect x="24" y="206" width="18" height="41" fill="url(#win)"/>
      <path d="M22 204 V247 M44 204 V247" stroke-width="0.9"/>
      <path d="M43 214 H52 V247 H43Z"/><rect x="43" y="215" width="9" height="32" fill="url(#win)"/>
      <path d="M52 227 H112 V247 H52Z"/><rect x="52" y="229" width="60" height="18" fill="url(#win2)"/>
      <path d="M62 227 Q67 220 72 227 M90 227 Q95 221 100 227"/>
      <rect x="79" y="209" width="17" height="18" fill="#efefef"/><rect x="79" y="209" width="17" height="5" fill="#e0e0e0"/>
      <rect x="96" y="213" width="17" height="14" fill="#efefef"/><rect x="96" y="213" width="17" height="5" fill="#e0e0e0"/>
      <path d="M112 216 H123 V247 H112Z"/><rect x="112" y="217" width="11" height="30" fill="url(#win)"/>
      <path d="M123 203 H143 V247 H123Z"/><rect x="124" y="205" width="18" height="42" fill="url(#win)"/>
      <path d="M122 203 V247 M144 203 V247" stroke-width="0.9"/>
      <path d="M143 214 H152 V247 H143Z"/><rect x="143" y="216" width="9" height="31" fill="url(#win)"/>
      <path d="M152 216 H178 V247 H152Z"/><rect x="152" y="218" width="26" height="29" fill="url(#win)"/>
      <rect x="168" y="224" width="58" height="23"/><rect x="168" y="224" width="58" height="6" fill="#e0e0e0"/><rect x="168" y="231" width="58" height="16" fill="url(#win2)"/>
      <rect x="194" y="216" width="32" height="9" fill="#e4e4e4"/>
      <rect x="226" y="232" width="32" height="15"/><rect x="226" y="232" width="32" height="4" fill="#e0e0e0"/>
      <path d="M258 195 L260 189 H272 L276 195 V247 H258Z"/><rect x="258" y="196" width="18" height="51" fill="url(#win)"/>
      <path d="M257 196 H277" stroke-width="1"/>
      <rect x="276" y="223" width="52" height="24"/><rect x="276" y="223" width="52" height="6" fill="#e0e0e0"/><rect x="276" y="230" width="52" height="17" fill="url(#win2)"/>
    </g>
  </svg>
</div>
<!-- Zoom toolbar -->
<div id="zbar" class="a">
  <!-- mic -->
  <svg class="a" style="left:20px;top:3px" width="14" height="14" viewBox="0 0 14 14"><rect x="5" y="1.5" width="4" height="7" rx="2" fill="none" stroke="#dcdcdc" stroke-width="1.1"/><path d="M3.3 6.3 C3.3 9 5 10.3 7 10.3 C9 10.3 10.7 9 10.7 6.3 M7 10.3 L7 12.5 M5 12.5 L9 12.5" stroke="#dcdcdc" stroke-width="1.1" fill="none"/><path d="M2 12.5 L12 1.5" stroke="#e0245e" stroke-width="1.4"/></svg>
  <svg class="a" style="left:40px;top:9px" width="7" height="5" viewBox="0 0 7 5"><path d="M1.3 3.5 L3.5 1.3 L5.7 3.5" stroke="#cfcfcf" stroke-width="1" fill="none"/></svg>
  <div class="t zl" style="left:21px;top:21.8px">Звук</div>
  <!-- video -->
  <svg class="a" style="left:68.5px;top:8px" width="16" height="11" viewBox="0 0 16 11" transform="scale(0.92)"><rect x="1" y="1.2" width="9.5" height="8.3" rx="1.8" fill="none" stroke="#dcdcdc" stroke-width="1.1"/><path d="M10.5 4.2 L14.3 2 L14.3 8.8 L10.5 6.6" fill="none" stroke="#dcdcdc" stroke-width="1.1"/></svg>
  <svg class="a" style="left:91.5px;top:9px" width="7" height="5" viewBox="0 0 7 5"><path d="M1.3 3.5 L3.5 1.3 L5.7 3.5" stroke="#cfcfcf" stroke-width="1" fill="none"/></svg>
  <div class="t zl" style="left:66.5px;top:21.8px">Видео</div>
  <!-- participants -->
  <svg class="a" style="left:270px;top:4px" width="14" height="13" viewBox="0 0 14 13"><circle cx="5" cy="3.3" r="2.2" fill="none" stroke="#dcdcdc" stroke-width="1"/><path d="M1 10.5 C1 7.8 2.8 6.6 5 6.6 C6.2 6.6 7 7 7.6 7.4" fill="none" stroke="#dcdcdc" stroke-width="1"/><circle cx="9.5" cy="6.2" r="1.9" fill="none" stroke="#dcdcdc" stroke-width="1"/><path d="M6.3 12 C6.3 10 7.8 9.2 9.5 9.2 C11.2 9.2 12.8 10 12.8 12 Z" fill="none" stroke="#dcdcdc" stroke-width="1"/></svg>
  <div class="t" style="left:288px;top:7.5px;font-size:5.5px;color:#cfcfcf">27</div>
  <svg class="a" style="left:302.5px;top:9px" width="7" height="5" viewBox="0 0 7 5"><path d="M1.3 3.5 L3.5 1.3 L5.7 3.5" stroke="#cfcfcf" stroke-width="1" fill="none"/></svg>
  <div class="t zl" style="left:263px;top:21.8px">Участники</div>
  <!-- chat -->
  <svg class="a" style="left:329px;top:4px" width="14" height="13" viewBox="0 0 14 13"><path d="M2 1.5 H12 Q13 1.5 13 2.5 V8.3 Q13 9.3 12 9.3 H6 L3 11.8 V9.3 H2 Q1 9.3 1 8.3 V2.5 Q1 1.5 2 1.5 Z" fill="none" stroke="#dcdcdc" stroke-width="1.05"/></svg>
  <svg class="a" style="left:349px;top:9px" width="7" height="5" viewBox="0 0 7 5"><path d="M1.3 3.5 L3.5 1.3 L5.7 3.5" stroke="#cfcfcf" stroke-width="1" fill="none"/></svg>
  <div class="t zl" style="left:330.5px;top:21.8px">Чат</div>
  <!-- react -->
  <svg class="a" style="left:378.5px;top:4px" width="14" height="13" viewBox="0 0 14 13"><path d="M7 11.5 L2.2 6.8 C0.8 5.4 0.9 3.2 2.4 2.1 C3.8 1.1 5.7 1.5 7 3 C8.3 1.5 10.2 1.1 11.6 2.1 C13.1 3.2 13.2 5.4 11.8 6.8 Z" fill="none" stroke="#dcdcdc" stroke-width="1.05"/></svg>
  <svg class="a" style="left:401px;top:9px" width="7" height="5" viewBox="0 0 7 5"><path d="M1.3 3.5 L3.5 1.3 L5.7 3.5" stroke="#cfcfcf" stroke-width="1" fill="none"/></svg>
  <div class="t zl" style="left:364px;top:21.8px">Отреагировать</div>
  <!-- share -->
  <svg class="a" style="left:429.5px;top:4px" width="14" height="13" viewBox="0 0 14 13"><rect x="1.5" y="1.5" width="11" height="9.5" rx="1.5" fill="none" stroke="#dcdcdc" stroke-width="1.05"/><path d="M7 8.8 V3.6 M4.8 5.6 L7 3.4 L9.2 5.6" fill="none" stroke="#dcdcdc" stroke-width="1.05"/></svg>
  <svg class="a" style="left:451.5px;top:9px" width="7" height="5" viewBox="0 0 7 5"><path d="M1.3 3.5 L3.5 1.3 L5.7 3.5" stroke="#cfcfcf" stroke-width="1" fill="none"/></svg>
  <div class="t zl" style="left:420px;top:21.8px">Поделиться</div>
  <!-- host tools -->
  <svg class="a" style="left:501.5px;top:4.5px" width="12" height="12" viewBox="0 0 12 12"><path d="M6 1 L10.5 2.6 L10.3 6.2 C10 8.5 8.2 10 6 11 C3.8 10 2 8.5 1.7 6.2 L1.5 2.6 Z" fill="none" stroke="#dcdcdc" stroke-width="1.05"/><path d="M6 1 V11 M1.6 5.6 H10.4" stroke="#dcdcdc" stroke-width="0.9"/><path d="M6 1 L10.5 2.6 L10.4 5.6 H6Z M1.6 5.6 H6 V11 C3.8 10 2 8.5 1.7 6.2Z" fill="#dcdcdc"/></svg>
  <div class="t zl" style="left:466px;top:21.8px">Инструменты организатора</div>
  <!-- more -->
  <div class="a" style="left:574px;top:5px;width:13px;height:13px;border:1.1px solid #dcdcdc;border-radius:50%"></div>
  <div class="a" style="left:577.3px;top:10.9px;width:1.4px;height:1.4px;background:#dcdcdc;box-shadow:2.6px 0 0 #dcdcdc,5.2px 0 0 #dcdcdc"></div>
  <div class="t zl" style="left:557px;top:21.8px">Дополнительно</div>
  <!-- end -->
  <div class="a" style="left:766.5px;top:5px;width:13px;height:13px;border-radius:50%;background:#1c0a0e;border:1.2px solid #e0245e"></div>
  <svg class="a" style="left:769px;top:7.5px" width="8" height="8" viewBox="0 0 8 8"><path d="M2 2 L6 6 M6 2 L2 6" stroke="#fff" stroke-width="1.4"/></svg>
  <div class="t zl" style="left:755px;top:21.8px">Завершение</div>
</div>
<!-- Taskbar -->
<div id="task" class="a">
  <svg class="a" style="left:7px;top:7px" width="10" height="9" viewBox="0 0 10 9"><path d="M0.5 1.2 L4.5 0.6 V4.2 H0.5Z M5.2 0.5 L9.5 0 V4.2 H5.2Z M0.5 4.8 H4.5 V8.4 L0.5 7.8Z M5.2 4.8 H9.5 V9 L5.2 8.5Z" fill="#f2f2f2"/></svg>
  <svg class="a" style="left:31px;top:4px" width="13" height="14" viewBox="0 0 13 14"><circle cx="7.3" cy="5.7" r="3.8" fill="none" stroke="#f0f0f0" stroke-width="1.3"/><path d="M4.6 8.5 L1.5 12" stroke="#f0f0f0" stroke-width="1.5"/></svg>
  <div class="a" style="left:58.5px;top:7px;width:11.5px;height:9px;background:linear-gradient(180deg,#e9b93e 0 25%,#f6d66a 25% 100%);border-radius:1px"></div>
  <div class="a" style="left:61px;top:12px;width:6px;height:2.5px;background:#5aa0d0"></div>
  <div class="a" style="left:84.5px;top:5.5px;width:12px;height:12px;border-radius:50%;background:conic-gradient(from -30deg,#e84335 0 120deg,#34a853 120deg 240deg,#fbbc05 240deg 360deg)"></div>
  <div class="a" style="left:87.5px;top:8.5px;width:6px;height:6px;border-radius:50%;background:#4285f4;border:1px solid #fff"></div>
  <div class="a" style="left:109.5px;top:5.5px;width:12px;height:12px;border-radius:50%;background:radial-gradient(circle at 55% 55%,#6b3fd0 0 28%,#ff6a2a 45%,#ff9a1a 70%,#ffcf3a 100%)"></div>
  <div class="a" style="left:105px;top:20.5px;width:21px;height:1.5px;background:#9cc4e8"></div>
  <div class="a" style="left:135.5px;top:5.5px;width:12px;height:12px;border-radius:50%;background:#161210"></div>
  <svg class="a" style="left:137px;top:7px" width="9" height="9" viewBox="0 0 9 9"><circle cx="4.5" cy="4.5" r="3.8" fill="none" stroke="#cfcfcf" stroke-width="0.6"/><ellipse cx="4.5" cy="4.5" rx="1.6" ry="3.8" fill="none" stroke="#cfcfcf" stroke-width="0.6"/><path d="M0.8 4.5 H8.2 M1.5 2.6 H7.5 M1.5 6.4 H7.5" stroke="#cfcfcf" stroke-width="0.5"/></svg>
  <div class="a" style="left:162px;top:7px;width:12px;height:9px;background:linear-gradient(160deg,#f0f0f0 0 40%,#c8c8c8 40% 70%,#e8e8e8 70%);clip-path:polygon(20% 0,85% 0,100% 60%,100% 100%,0 100%,0 60%)"></div>
  <div class="a" style="left:157px;top:20.5px;width:21px;height:1.5px;background:#9cc4e8"></div>
  <div class="a" style="left:187.5px;top:5.5px;width:12px;height:12px;border-radius:50%;background:#3aa2da"></div>
  <svg class="a" style="left:189px;top:8px" width="9" height="7" viewBox="0 0 9 7"><path d="M0.8 3.2 L8 0.5 L6.7 6.2 L4.2 4.6 L3 5.8 L3.1 4.1 L6.6 1.6 L2.6 3.9Z" fill="#fff"/></svg>
  <div class="a" style="left:195px;top:12.5px;width:5px;height:5px;background:#9a9a9a;border-radius:1px"></div>
  <div class="a" style="left:183px;top:20.5px;width:21px;height:1.5px;background:#9cc4e8"></div>
  <div class="a" style="left:213.5px;top:5px;width:11px;height:12px;background:linear-gradient(180deg,#4aa0ee,#1e64c0);border-radius:1px"></div>
  <div class="a" style="left:216px;top:7px;width:7px;height:1px;background:#e6f0fa;box-shadow:0 2.5px 0 #e6f0fa,0 5px 0 #e6f0fa"></div>
  <div class="a" style="left:211.5px;top:10.5px;width:5px;height:4.5px;background:#2a6ad0;border:0.8px solid #e0ecf8"></div>
  <div class="a" style="left:208px;top:20.5px;width:21px;height:1.5px;background:#9cc4e8"></div>
  <div class="a" style="left:233px;top:0;width:24.5px;height:22px;background:#6a5c56"></div>
  <div class="a" style="left:238.5px;top:5px;width:13px;height:13px;border-radius:50%;background:#1f70f2"></div>
  <div class="t" style="left:240.2px;top:9.6px;font-size:3.3px;font-weight:bold;color:#dfe9ff">zoom</div>
  <div class="a" style="left:234px;top:20.5px;width:22.5px;height:1.5px;background:#9cc4e8"></div>
  <!-- tray -->
  <svg class="a" style="left:645px;top:8px" width="9" height="6" viewBox="0 0 9 6"><path d="M1 4.8 L4.5 1.3 L8 4.8" stroke="#e8e8e8" stroke-width="1.1" fill="none"/></svg>
  <div class="a" style="left:659px;top:7px;width:6px;height:9px;border:1px solid #d8d8d8;border-radius:1px"></div>
  <div class="a" style="left:664px;top:10px;width:3px;height:3px;background:#d8d8d8"></div>
  <div class="a" style="left:671.5px;top:6px;width:5px;height:6px;background:#e0e0e0;border-radius:1px 1px 0 0"></div>
  <div class="a" style="left:673px;top:12px;width:2px;height:4px;background:#e0e0e0"></div>
  <div class="a" style="left:682px;top:8px;width:10px;height:7px;background:#e6e6e6;border-radius:1px"></div>
  <svg class="a" style="left:694px;top:6px" width="11" height="10" viewBox="0 0 11 10"><path d="M1 9 C3 5 7 3 10 2 M3 9 C4.5 6.5 7 5 10 4.5 M5.5 9 C6.5 7.8 8 7 10 7" stroke="#bdbdbd" stroke-width="0.9" fill="none"/><path d="M10 1 V9.5 H1Z" fill="none" stroke="#8a8a8a" stroke-width="0.5"/></svg>
  <svg class="a" style="left:706px;top:6px" width="10" height="10" viewBox="0 0 10 10"><path d="M1 3.5 H3 L6 1 V9 L3 6.5 H1Z" fill="none" stroke="#e0e0e0" stroke-width="0.9"/><path d="M7.5 3.5 V6.5" stroke="#e0e0e0" stroke-width="0.9"/></svg>
  <div class="t" style="left:721.5px;top:8.5px;font-size:6px;color:#f0f0f0">УКР</div>
  <div class="t" style="left:747.5px;top:3px;font-size:6px;color:#f0f0f0">10:25</div>
  <div class="t" style="left:740px;top:13px;font-size:6px;color:#f0f0f0">18.03.2026</div>
  <svg class="a" style="left:777px;top:5px" width="13" height="13" viewBox="0 0 13 13"><path d="M1 1 H10 V8 H5 L3 10 V8 H1Z" fill="#f0f0f0"/><path d="M2.5 3 H8.5 M2.5 5 H8.5" stroke="#4a3b35" stroke-width="0.6"/><circle cx="9.5" cy="9.5" r="2.6" fill="#2a2422" stroke="#e0e0e0" stroke-width="0.6"/><path d="M9.5 8.3 V10.8" stroke="#fff" stroke-width="0.8"/></svg>
</div>
</div>
</body></html>
